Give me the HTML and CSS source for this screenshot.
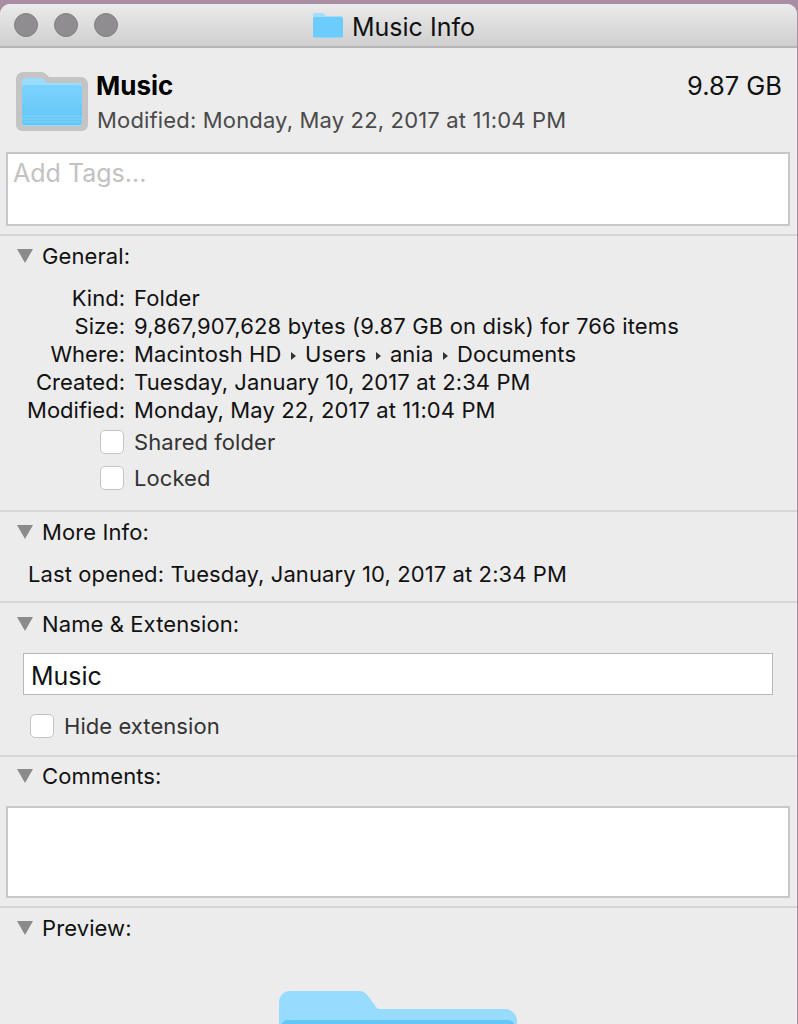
FILE: index.html
```html
<!DOCTYPE html>
<html lang="en">
<head>
<meta charset="utf-8">
<title>Music Info</title>
<link rel="stylesheet" href="styles.css">
</head>
<body>
<div class="window">
  <header class="titlebar">
    <div class="lights"><span class="light"></span><span class="light"></span><span class="light"></span></div>
    <div class="title">
      <svg class="title-icon" viewBox="0 0 32 26"><path d="M1 24V3a2 2 0 0 1 2-2h7c1.500 0 2 .6 3 2l1 1h15a2 2 0 0 1 2 2v18a1.500 1.500 0 0 1-1.500 1.500h-27A1.500 1.500 0 0 1 1 24z" fill="#a4ddfb"/><path d="M1 24V7a2 2 0 0 1 2-2h26a2 2 0 0 1 2 2v17a1.500 1.500 0 0 1-1.500 1.500h-27A1.500 1.500 0 0 1 1 24z" fill="#6cccfd"/></svg>
      <span class="title-text">Music Info</span>
    </div>
  </header>

  <section class="summary">
    <svg class="big-icon" viewBox="0 0 72 60">
      <defs><linearGradient id="front" x1="0" y1="0" x2="0" y2="1"><stop offset="0" stop-color="#7bd2fe"/><stop offset="1" stop-color="#62c6f8"/></linearGradient></defs>
      <path d="M0 50V7a7 7 0 0 1 7-7h17c4 0 5 1 7 3l2 2h32a7 7 0 0 1 7 7v41a6 6 0 0 1-6 6H6a6 6 0 0 1-6-6z" fill="#c4c4c4"/>
      <path d="M6 50V10a4 4 0 0 1 3-4h15c3 0 4 1 5 3l2 2h33a3 3 0 0 1 2 3v37a3 3 0 0 1-3 3H9a3 3 0 0 1-3-3z" fill="#9adcfd"/>
      <path d="M6 50V16a3 3 0 0 1 3-3h54a3 3 0 0 1 3 3v34a3 3 0 0 1-3 3H9a3 3 0 0 1-3-3z" fill="url(#front)"/>
      <path d="M6 44h60M6 47h60M6 50h60" stroke="#85d4fb" fill="none"/>
    </svg>
    <div class="summary-text">
      <div class="summary-top"><span class="name">Music</span><span class="size">9.87 GB</span></div>
      <div class="modified">Modified: Monday, May 22, 2017 at 11:04 PM</div>
    </div>
  </section>

  <div class="tags">Add Tags...</div>

  <section class="panel general">
    <div class="panel-head"><span class="tri"></span>General:</div>
    <dl class="facts">
      <dt>Kind:</dt><dd>Folder</dd>
      <dt>Size:</dt><dd class="size-row">9,867,907,628 bytes (9.87 GB on disk) for 766 items</dd>
      <dt>Where:</dt><dd>Macintosh HD <i class="arrow"></i> Users <i class="arrow"></i> ania <i class="arrow"></i> Documents</dd>
      <dt>Created:</dt><dd>Tuesday, January 10, 2017 at 2:34 PM</dd>
      <dt>Modified:</dt><dd>Monday, May 22, 2017 at 11:04 PM</dd>
    </dl>
    <div class="checks">
      <label class="check"><span class="box"></span>Shared folder</label>
      <label class="check"><span class="box"></span>Locked</label>
    </div>
  </section>

  <section class="panel more">
    <div class="panel-head"><span class="tri"></span>More Info:</div>
    <div class="opened">Last opened: Tuesday, January 10, 2017 at 2:34 PM</div>
  </section>

  <section class="panel naming">
    <div class="panel-head"><span class="tri"></span>Name &amp; Extension:</div>
    <div class="name-field">Music</div>
    <label class="check hide"><span class="box"></span>Hide extension</label>
  </section>

  <section class="panel comments">
    <div class="panel-head"><span class="tri"></span>Comments:</div>
    <div class="comment-box"></div>
  </section>

  <section class="panel preview">
    <div class="panel-head"><span class="tri"></span>Preview:</div>
    <svg class="preview-folder" viewBox="0 0 238 33"><path d="M0 33V11A11 11 0 0 1 11 0h68c5 0 8 2 10 5l6 8c2 3 3 5 7 5h124a12 12 0 0 1 12 12v3z" fill="#97dcff"/><path d="M3 33v-1a9 9 0 0 1 9-3h214a9 9 0 0 1 9 3v1z" fill="#63c8f8"/></svg>
  </section>
</div>
</body>
</html>
```
FILE: styles.css
```css
* { box-sizing: border-box; }
html, body { margin: 0; height: 100%; }
body {
  background: #a98ea3;
  font-family: "Inter", "Liberation Sans", sans-serif;
  font-size: 22px;
  letter-spacing: 0.1px;
  color: #111;
  overflow: hidden;
}
.window {
  height: 1020px;
  margin: 4px 1px 0 0;
  background: #ececec;
  border-radius: 10px 10px 0 0;
  overflow: hidden;
}
.titlebar {
  height: 44px;
  display: flex;
  align-items: center;
  padding: 0 0 0 14px;
  background: linear-gradient(#ebebeb, #cfcfcf);
  border-bottom: 2px solid #b5b5b5;
}
.lights { display: flex; gap: 16px; }
.light {
  width: 24px;
  height: 24px;
  border-radius: 50%;
  background: #8f8d90;
  border: 1px solid #807e81;
}
.title {
  display: flex;
  align-items: center;
  gap: 8px;
  margin-left: 194px;
  font-size: 25px;
  letter-spacing: 0;
}
.title-icon { width: 32px; height: 26px; }
.title-text { padding-top: 3px; }
.summary { display: flex; height: 104px; padding: 24px 15px 0 16px; gap: 8px; }
.big-icon { width: 72px; height: 60px; flex: none; }
.summary-text { flex: 1; }
.summary-top { display: flex; justify-content: space-between; align-items: center; height: 26px; }
.name { font-weight: 700; font-size: 26px; letter-spacing: 0; color: #000; }
.size { font-size: 25.500px; letter-spacing: 0; }
.modified { margin-top: 8px; margin-left: 1px; color: #4a4a4a; line-height: 28px; letter-spacing: 0.16px; }
.tags {
  margin: 0 7px 0 6px;
  height: 74px;
  padding: 3px 5px;
  background: #fff;
  border: 2px solid #c8c8c8;
  color: #c2c2c2;
  font-size: 25px;
  letter-spacing: 0;
  line-height: 32px;
}
.panel { border-top: 2px solid #d6d6d6; }
.general { margin-top: 8px; height: 276px; }
.more { height: 91px; }
.naming { height: 154px; }
.comments { height: 151px; }
.preview { position: relative; height: 200px; }
.panel-head {
  display: flex;
  align-items: center;
  height: 28px;
  margin-top: 6px;
  padding-left: 17px;
  color: #111;
}
.naming .panel-head { margin-top: 7px; }
.comments .panel-head { margin-top: 5px; }
.tri {
  width: 0;
  height: 0;
  margin-right: 9px;
  border-left: 8.500px solid transparent;
  border-right: 8.500px solid transparent;
  border-top: 14px solid #8b8b8b;
}
.facts {
  display: grid;
  grid-template-columns: 125px 1fr;
  column-gap: 9px;
  grid-auto-rows: 28px;
  margin: 14px 0 0 0;
  line-height: 28px;
}
.facts dt { text-align: right; letter-spacing: 0; }
.facts dd { margin: 0; white-space: nowrap; }
.facts .size-row { letter-spacing: 0.16px; }
.arrow {
  display: inline-block;
  width: 0;
  height: 0;
  margin: 0 3px 2px 3px;
  border-top: 4px solid transparent;
  border-bottom: 4px solid transparent;
  border-left: 5px solid #333;
}
.checks { display: flex; flex-direction: column; gap: 8px; padding: 4px 0 0 100px; }
.check { display: flex; align-items: center; gap: 10px; height: 28px; color: #333; letter-spacing: 0.06px; }
.box {
  width: 24px;
  height: 24px;
  background: #fff;
  border: 1px solid #c4c4c4;
  border-radius: 5px;
}
.opened { margin: 14px 0 0 28px; line-height: 28px; }
.name-field {
  margin: 15px 24px 0 23px;
  height: 42px;
  padding-left: 7px;
  background: #fff;
  border: 1px solid #b9b9b9;
  font-size: 25px;
  letter-spacing: 0;
  line-height: 44px;
}
.hide { margin: 17px 0 0 30px; }
.comment-box {
  margin: 16px 7px 0 6px;
  height: 92px;
  background: #fff;
  border: 2px solid #c8c8c8;
}
.preview-folder {
  position: absolute;
  left: 279px;
  top: 83px;
  width: 238px;
  height: 33px;
}
```
